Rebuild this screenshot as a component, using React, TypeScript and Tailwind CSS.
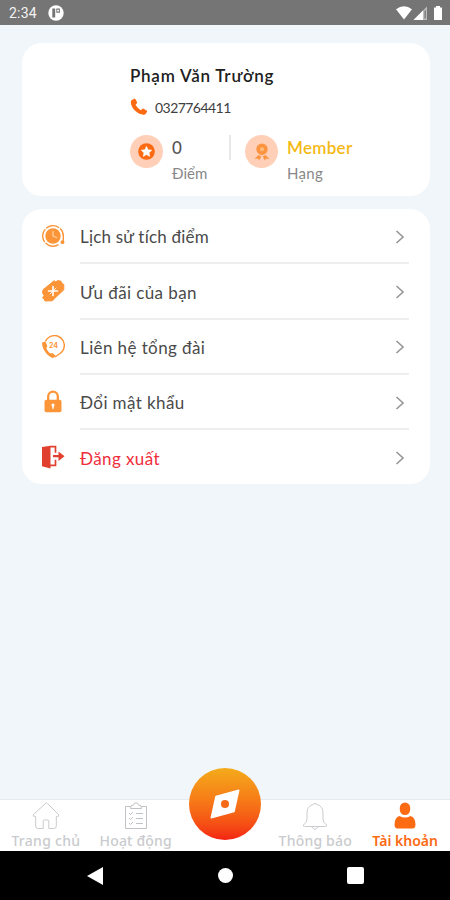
import type { ReactNode } from 'react';

// Line icons of the account menu
const HistoryIcon = () => (
    <svg viewBox="0 0 24 24" className="h-6 w-6" fill="none">
        <path d="M17.500 20.700A10.300 10.300 0 1 1 22.300 12.500V17" stroke="#fb9538" strokeWidth="1.400" strokeDasharray="14 1.200" />
        <circle cx="12" cy="12" r="7.700" fill="#fb9538" />
        <path d="M12 7.500V12l3.600 1.500" stroke="#ffd0a3" strokeWidth="1.300" strokeLinecap="round" />
        <circle cx="21.500" cy="18.200" r="1.900" fill="#fb9538" />
    </svg>
);

const VoucherIcon = () => (
    <svg viewBox="0 0 24 24" className="h-6 w-6">
        <path d="M2 10.800 13 1.800 14.800 2.800 17 1.600 20 2.200 21 4.500 22.800 5.500V10.800L13.500 19.500 11.500 21.800 4 22 3.200 20 1.600 19 3 16.500 1.600 14Z" fill="#fb9538" stroke="#fb9538" strokeLinejoin="round" />
        <path d="M12 7.500v9M7.500 12h9" stroke="#fff" strokeWidth="1.600" strokeLinecap="round" />
        <path d="m8.800 15.200 6.400-6.400" stroke="#fff" strokeWidth=".8" />
    </svg>
);

const HotlineIcon = () => (
    <svg viewBox="0 0 24 24" className="h-6 w-6" fill="none">
        <path d="M4.500 6.500A9.800 9.800 0 1 1 19 18.500L14 22" stroke="#fb9538" strokeWidth="1.500" />
        <path d="M1.300 7.200c-1.500 5 5.500 15.300 11 15.700l2.500-2-3.300-3-2 .7c-2-1.200-3.600-3.500-4.200-5.800l1.200-1.500-2-4.500Z" fill="#fb9538" />
        <text x="8" y="13.200" fontSize="7" fontWeight="700" fill="#fb9538" fontFamily="Inter, sans-serif">24</text>
    </svg>
);

const LockIcon = () => (
    <svg viewBox="0 0 24 24" className="h-6 w-6" fill="none">
        <path d="M7.200 11V6.500a4.800 4.800 0 0 1 9.600 0V11" stroke="#fb9538" strokeWidth="2.300" />
        <rect x="3.500" y="9.700" width="17" height="12.500" rx="2" fill="#fb9538" />
        <circle cx="12" cy="15" r="1.600" fill="#fff" />
        <path d="M12 15.500v3.300" stroke="#fff" strokeWidth="1.600" />
    </svg>
);

const LogoutIcon = () => (
    <svg viewBox="0 0 24 24" className="h-6 w-6" fill="none">
        <path d="M1 2 9.500.8V23.400L1 21.200Z" fill="#e2402f" />
        <path d="M9 1.700h5.500v6M9 20.300h5.500v-5.500" stroke="#e2402f" strokeWidth="1.700" />
        <path d="M12 11.200h7" stroke="#e2402f" strokeWidth="2.200" />
        <path d="m17.500 6.500 6 4.700-6 4.700Z" fill="#e2402f" />
    </svg>
);

const MENU: { label: string; icon: ReactNode; text: string }[] = [
    { label: 'Lịch sử tích điểm', icon: <HistoryIcon />, text: 'text-[#4a4a4a] tracking-[0.2px]' },
    { label: 'Ưu đãi của bạn', icon: <VoucherIcon />, text: 'text-[#4a4a4a] tracking-[0.4px]' },
    { label: 'Liên hệ tổng đài', icon: <HotlineIcon />, text: 'text-[#4a4a4a] tracking-[0.4px]' },
    { label: 'Đổi mật khẩu', icon: <LockIcon />, text: 'text-[#4a4a4a] tracking-[0.4px]' },
    { label: 'Đăng xuất', icon: <LogoutIcon />, text: 'text-[#f02d3a] tracking-[0.4px]' },
];

function StatusBar() {
    return (
        <div className="flex h-[25px] shrink-0 items-center bg-[#757575] pr-[7px] pl-[9px] font-[Roboto,sans-serif] text-[14px] text-[#f2f2f2]">
            <span className="w-[39px] pt-px tracking-[0.2px]">2:34</span>
            <svg viewBox="0 0 16 16" className="h-4 w-4">
                <circle cx="8" cy="8" r="7.700" fill="#fff" />
                <path d="M4.300 3.500h2.900v9H4.300ZM8.300 3.500h3.600v4.300H8.300Z" fill="#757575" />
                <path d="M9.200 4.800h1.700v1.700H9.200Z" fill="#fff" />
            </svg>
            <svg viewBox="0 0 48 16" className="ml-auto h-4 w-12">
                <path d="M1 4.200Q9 -1.500 17 4.200L9 14.500Z" fill="#fff" />
                <path d="M18.500 15 32 1.500V15Z" fill="#bdbdbd" />
                <path d="M18.500 15 28 5.500V15Z" fill="#fff" />
                <path d="M29.500 6v7.500h1.300V4.700Z" fill="#757575" />
                <path d="M41 1h4v1.500h2V15h-8V2.500h2Z" fill="#fff" />
            </svg>
        </div>
    );
}

function ProfileCard() {
    return (
        <div className="h-[153px] shrink-0 rounded-[20px] bg-white pt-[21px] pl-[108px]">
            <h1 className="h-6 text-[17px] leading-6 font-semibold tracking-[0.75px] whitespace-nowrap text-[#202020]">Phạm Văn Trường</h1>
            <div className="mt-[7px] flex h-6 items-center">
                <svg viewBox="0 0 18 18" className="h-[18px] w-[18px]">
                    <path d="M1.500 2.200 4 .7q.8-.4 1.300.4l1.700 3q.4.800-.3 1.400L5.500 6.800q1.900 3.600 5.400 5.400l1.300-1.300q.6-.6 1.400-.2l3 1.700q.8.500.4 1.300L15.600 16q-.6.900-2 .8C7 16 1.200 10.200.8 4.200q0-1.300.7-2Z" fill="#fc6a12" />
                </svg>
                <span className="ml-[7px] text-[14px] tracking-[-0.55px] text-[#404040]">0327764411</span>
            </div>
            <div className="mt-4 flex h-[54px] items-start">
                <div className="flex h-[33px] w-[33px] items-center justify-center rounded-full bg-[#ffcfb8]">
                    <svg viewBox="0 0 18 18" className="h-[17px] w-[17px]">
                        <circle cx="9" cy="9" r="8.800" fill="#fc6a12" />
                        <path d="m9 3.500 1.700 3.600 3.900.5-2.900 2.700.7 3.900L9 12.300l-3.400 1.900.7-3.900-2.900-2.700 3.900-.5Z" fill="#fff" stroke="#fff" strokeLinejoin="round" strokeWidth=".6" />
                    </svg>
                </div>
                <div className="ml-[9px] w-[57px]">
                    <p className="pt-px text-[17px] leading-6 font-medium text-[#555]">0</p>
                    <p className="pt-px text-[15px] leading-6 text-[#888]">Điểm</p>
                </div>
                <div className="h-[25px] w-[2px] bg-[#e8e8e8]" />
                <div className="ml-[14px] flex h-[33px] w-[33px] items-center justify-center rounded-full bg-[#ffcfb8]">
                    <svg viewBox="0 0 18 18" className="h-[18px] w-[18px]" fill="none">
                        <circle cx="9" cy="6.300" r="3.800" stroke="#fc933e" strokeWidth="3.800" />
                        <circle cx="9" cy="6.300" r="2" fill="#fdb878" />
                        <path d="M5.500 12 8.200 13.500 6.200 17.500 5 15.500 1.500 16ZM12.500 12 9.800 13.500 11.800 17.500 13 15.500 16.500 16Z" fill="#fc933e" />
                    </svg>
                </div>
                <div className="ml-[9px]">
                    <p className="pt-px text-[17px] leading-6 font-semibold tracking-[0.3px] text-[#f5b914]">Member</p>
                    <p className="pt-px text-[15px] leading-6 tracking-[0.3px] text-[#888]">Hạng</p>
                </div>
            </div>
        </div>
    );
}

function Menu() {
    return (
        <div className="mt-[13px] h-[275px] shrink-0 overflow-hidden rounded-[20px] bg-white pr-[21px] pl-[19px]">
            {MENU.map((item, i) => (
                <div key={item.label} className="flex h-[55.3px]">
                    <div className="w-[39px] pt-[15px]">{item.icon}</div>
                    <div className={`flex flex-1 items-center justify-between pt-[2px] ${i < MENU.length - 1 ? 'border-b-2 border-[#eeeeef]' : 'pb-[2px]'}`}>
                        <span className={`pt-px text-[17px] ${item.text}`}>{item.label}</span>
                        <svg viewBox="0 0 10 16" className="mr-1 h-4 w-[10px]" fill="none" stroke="#999" strokeWidth="1.700">
                            <path d="m1.500 2 6.500 6-6.500 6" />
                        </svg>
                    </div>
                </div>
            ))}
        </div>
    );
}

function TabBar() {
    return (
        <div className="relative grid h-[52px] shrink-0 grid-cols-5 border-t border-[#e7eaec] bg-white pl-px text-center font-['Noto_Sans',sans-serif] text-[14px] leading-4 font-medium whitespace-nowrap text-[#c9cbce]">
            <div className="flex flex-col items-center pt-[2px]">
                <svg viewBox="0 0 28 28" className="h-7 w-7" fill="none" stroke="#c9cbce" strokeWidth="1">
                    <path d="M14 1 1.200 12.800q-.5 2 2.500 1.700V24q0 2.500 2.500 2.500h5V19q0-1 1-1h3.600q1 0 1 1v7.500h5q2.500 0 2.500-2.500v-9.500q3 .3 2.500-1.700L15.500 1.500Q14.700.5 14 1Z" />
                </svg>
                <span className="mt-[3px] tracking-[0.3px]">Trang chủ</span>
            </div>
            <div className="flex flex-col items-center pt-[2px]">
                <svg viewBox="0 0 28 28" className="h-7 w-7" fill="none" stroke="#bfc2c6" strokeWidth="1">
                    <path d="M8.500 4.500h-5v22h21v-22h-5M8.500 6.500q-.5-3.500 3-3.500Q12 .8 14 .8T16.500 3q3.500 0 3 3.500Z" />
                    <path d="m7 11 1.500 1.500L11 10m3 1.500h7M7 16l1.500 1.500L11 15m3 1.500h7M7 21l1.500 1.500L11 20m3 1.500h7" />
                </svg>
                <span className="mt-[3px] tracking-[0.15px]">Hoạt động</span>
            </div>
            <div className="relative">
                <div className="absolute -top-[32px] left-[8px] flex h-[72px] w-[72px] items-center justify-center rounded-full bg-gradient-to-b from-[#f3ab1b] to-[#f32113]">
                    <svg viewBox="0 0 30 30" className="h-[30px] w-[30px]">
                        <path d="M1.300 28.700 6 7.500 28.700 1.300 24 22.500Z" fill="#fff" stroke="#fff" strokeWidth="1.500" strokeLinejoin="round" />
                        <circle cx="15" cy="15" r="4" fill="#f56a17" />
                    </svg>
                </div>
            </div>
            <div className="flex flex-col items-center pt-[2px]">
                <svg viewBox="0 0 28 28" className="h-7 w-7" fill="none" stroke="#c9cbce" strokeWidth="1">
                    <path d="M12 2.500q2-2.500 4 0 6 1.500 6 8.500v6q0 3.500 3.500 6 .5 1.500-1 1.500h-21q-1.500 0-1-1.500Q6 20.500 6 17v-6q0-7 6-8.500ZM10.500 24.500Q14 30 17.500 24.500" />
                </svg>
                <span className="mt-[3px] tracking-[0.2px]">Thông báo</span>
            </div>
            <div className="flex flex-col items-center pt-[2px] text-[#fc6a12]">
                <svg viewBox="0 0 28 28" className="h-7 w-7" fill="currentColor">
                    <rect x="8.800" y=".5" width="10.400" height="12.500" rx="5.200" />
                    <path d="M8.500 14q5.500 3 11 0 5 1.500 5 8.500 0 4-3 4h-15q-3 0-3-4 0-7 5-8.500Z" />
                </svg>
                <span className="mt-[3px] font-semibold">Tài khoản</span>
            </div>
        </div>
    );
}

export default function App() {
    return (
        <div className="flex h-[900px] w-[450px] flex-col overflow-hidden bg-[#f0f6f9] font-[Lato,'Noto_Sans',sans-serif]">
            <StatusBar />
            <main className="flex flex-1 flex-col pt-[18px] pr-[20px] pl-[22px]">
                <ProfileCard />
                <Menu />
            </main>
            <TabBar />
            <div className="grid h-[49px] shrink-0 grid-cols-[190px_70px_190px] items-center justify-items-center bg-black">
                <svg viewBox="0 0 16 18" className="h-[18px] w-4" fill="#fff">
                    <path d="M0 9 16 0v18Z" />
                </svg>
                <div className="h-[15px] w-[15px] rounded-full bg-white" />
                <div className="h-[17px] w-[17px] rounded-[2px] bg-white" />
            </div>
        </div>
    );
}
